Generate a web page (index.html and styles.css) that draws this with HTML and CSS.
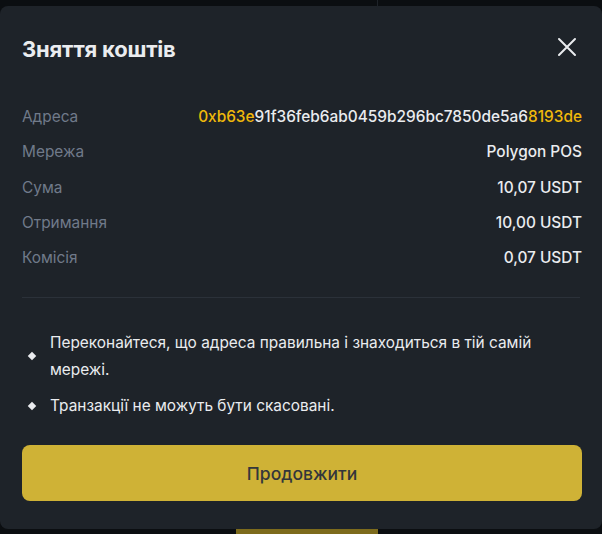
FILE: index.html
```html
<!DOCTYPE html>
<html lang="uk">
<head>
<meta charset="utf-8">
<title>Зняття коштів</title>
<link rel="stylesheet" href="styles.css">
</head>
<body>
<div class="top-strip"><div class="top-col"></div></div>
<div class="modal">
  <div class="header">
    <h1 class="title">Зняття коштів</h1>
    <svg class="close" width="20" height="20" viewBox="0 0 20 20"><path d="M2 2 L18 18 M18 2 L2 18" stroke="#eaecef" stroke-width="2" stroke-linecap="round"/></svg>
  </div>
  <div class="rows">
    <div class="row"><span class="label">Адреса</span><span class="value"><span class="hl">0xb63e</span>91f36feb6ab0459b296bc7850de5a6<span class="hl">8193de</span></span></div>
    <div class="row"><span class="label">Мережа</span><span class="value">Polygon POS</span></div>
    <div class="row"><span class="label">Сума</span><span class="value">10,07 USDT</span></div>
    <div class="row"><span class="label">Отримання</span><span class="value">10,00 USDT</span></div>
    <div class="row"><span class="label">Комісія</span><span class="value">0,07 USDT</span></div>
  </div>
  <div class="divider"></div>
  <ul class="notes">
    <li class="note"><span class="dot"></span><span class="note-text">Переконайтеся, що адреса правильна і знаходиться в тій самій мережі.</span></li>
    <li class="note"><span class="dot"></span><span class="note-text">Транзакції не можуть бути скасовані.</span></li>
  </ul>
  <button class="btn">Продовжити</button>
</div>
<div class="bottom-strip"><div class="bottom-bar"></div></div>
</body>
</html>
```
FILE: styles.css
```css
* { box-sizing: border-box; }
html, body { margin: 0; padding: 0; }
body {
  width: 602px;
  height: 534px;
  overflow: hidden;
  background: #0b0e11;
  font-family: Inter, "Liberation Sans", sans-serif;
  color: #eaecef;
}
.top-strip { height: 6px; }
.top-col { width: 378px; height: 6px; border-right: 1px solid #1e2329; }
.modal {
  height: 523px;
  background: #1e2329;
  border-radius: 8px;
  padding: 30px 20px 28px 22px;
  display: flex;
  flex-direction: column;
}
.header {
  display: flex;
  justify-content: space-between;
  align-items: center;
  height: 26px;
}
.title {
  margin: 0;
  font-size: 22px;
  font-weight: 700;
  line-height: 26px;
  letter-spacing: -0.2px;
}
.close { margin-right: 5px; margin-top: -4px; }
.rows { margin-top: 37px; }
.row {
  height: 35.25px;
  display: flex;
  justify-content: space-between;
  align-items: center;
  font-size: 15.4px;
}
.label { color: #707a8a; }
.value { color: #eaecef; font-weight: 500; }
.hl { color: #f0b90b; }
.divider { height: 1px; background: #2b3139; margin: 22px 2px 0 0; }
.notes { list-style: none; margin: 31px 0 0; padding: 0; display: flex; flex-direction: column; gap: 9px; }
.note { display: flex; align-items: center; font-size: 15.4px; line-height: 27px; }
.dot {
  flex: none;
  width: 6px; height: 6px;
  background: #eaecef;
  transform: rotate(45deg);
  margin: 0 15px 0 7px;
}
.note-text { color: #eaecef; }
.btn {
  margin-top: 26px;
  height: 56px;
  border: none;
  border-radius: 8px;
  background: #cfb236;
  color: #33363b;
  font-family: inherit;
  font-size: 17.5px;
  font-weight: 500;
}
.bottom-strip { height: 5px; }
.bottom-bar { margin-left: 236px; width: 142px; height: 5px; background: #7d6b1c; }
```
